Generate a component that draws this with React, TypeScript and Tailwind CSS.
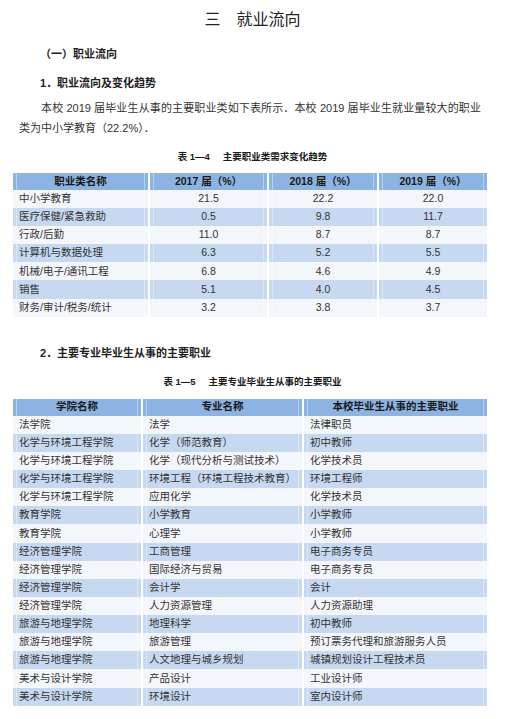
import React from "react";

const trend = [
  ["中小学教育", "21.5", "22.2", "22.0"],
  ["医疗保健/紧急救助", "0.5", "9.8", "11.7"],
  ["行政/后勤", "11.0", "8.7", "8.7"],
  ["计算机与数据处理", "6.3", "5.2", "5.5"],
  ["机械/电子/通讯工程", "6.8", "4.6", "4.9"],
  ["销售", "5.1", "4.0", "4.5"],
  ["财务/审计/税务/统计", "3.2", "3.8", "3.7"],
];

const majors = [
  ["法学院", "法学", "法律职员"],
  ["化学与环境工程学院", "化学（师范教育）", "初中教师"],
  ["化学与环境工程学院", "化学（现代分析与测试技术）", "化学技术员"],
  ["化学与环境工程学院", "环境工程（环境工程技术教育）", "环境工程师"],
  ["化学与环境工程学院", "应用化学", "化学技术员"],
  ["教育学院", "小学教育", "小学教师"],
  ["教育学院", "心理学", "小学教师"],
  ["经济管理学院", "工商管理", "电子商务专员"],
  ["经济管理学院", "国际经济与贸易", "电子商务专员"],
  ["经济管理学院", "会计学", "会计"],
  ["经济管理学院", "人力资源管理", "人力资源助理"],
  ["旅游与地理学院", "地理科学", "初中教师"],
  ["旅游与地理学院", "旅游管理", "预订票务代理和旅游服务人员"],
  ["旅游与地理学院", "人文地理与城乡规划", "城镇规划设计工程技术员"],
  ["美术与设计学院", "产品设计", "工业设计师"],
  ["美术与设计学院", "环境设计", "室内设计师"],
];

const rowBg = (i: number) => (i % 2 === 0 ? "bg-[#f3f6fb]" : "bg-[#c6d9f1]");

// one table cell: bg from the row, faint inner rule 3px inside each side
const Cell = ({
  children,
  bg,
  center,
  bold,
}: {
  children: React.ReactNode;
  bg: string;
  center?: boolean;
  bold?: boolean;
}) => (
  <div className={`${bg} px-[3px] h-full`}>
    <div
      className={`h-full flex items-center border-x border-white/40 ${
        center ? "justify-center" : "pl-[2px]"
      } ${bold ? "font-bold text-[#1a1a1a]" : "text-[#333]"}`}
    >
      {children}
    </div>
  </div>
);

const Caption = ({ no, title }: { no: string; title: string }) => (
  <div className="mt-[11px] flex justify-center text-[9.5px] leading-[16px] font-bold text-[#1a1a1a] whitespace-pre">
    <span>表 {no}</span>
    <span className="ml-[13px]">{title}</span>
  </div>
);

export default function App() {
  return (
    <div
      className="w-[505px] h-[719px] bg-white overflow-hidden pt-[10px]"
      style={{ fontFamily: '"Liberation Sans", "Noto Sans CJK SC", sans-serif' }}
    >
      <h1 className="text-center text-[16px] leading-[20px] text-[#222] whitespace-pre">
        三{"\u3000"}就业流向
      </h1>

      <h2 className="mt-[14px] pl-[40px] text-[11px] leading-[20px] font-bold text-[#222]">
        （一）职业流向
      </h2>
      <h3 className="mt-[9px] pl-[40px] text-[11px] leading-[20px] font-bold text-[#222]">
        1．职业流向及变化趋势
      </h3>
      <p className="mt-[5px] ml-[19px] mr-[24px] text-[11px] leading-[20px] text-[#333] indent-[22px] text-justify">
        本校 2019 届毕业生从事的主要职业类如下表所示．本校 2019 届毕业生就业量较大的职业类为中小学教育（22.2%）．
      </p>

      <Caption no="1—4" title="主要职业类需求变化趋势" />

      <div className="mt-[8px] mx-[13px] grid grid-cols-[135px_117px_108px_108px] gap-x-[2px] text-[10.5px] bg-white">
        {["职业类名称", "2017 届（%）", "2018 届（%）", "2019 届（%）"].map((h) => (
          <div key={h} className="h-[17px]">
            <Cell bg="bg-[#8db3e2]" center bold>
              {h}
            </Cell>
          </div>
        ))}
        {trend.map((r, i) =>
          r.map((c, j) => (
            <div key={`${i}-${j}`} className="h-[18.1px]">
              <Cell bg={rowBg(i)} center={j > 0}>
                {c}
              </Cell>
            </div>
          ))
        )}
      </div>

      <h3 className="mt-[26px] pl-[40px] text-[11px] leading-[20px] font-bold text-[#222]">
        2．主要专业毕业生从事的主要职业
      </h3>

      <Caption no="1—5" title="主要专业毕业生从事的主要职业" />

      <div className="mt-[9px] mx-[13px] grid grid-cols-[128px_159px_183px] gap-x-[2px] text-[10.5px] bg-white">
        {["学院名称", "专业名称", "本校毕业生从事的主要职业"].map((h) => (
          <div key={h} className="h-[17px]">
            <Cell bg="bg-[#8db3e2]" center bold>
              {h}
            </Cell>
          </div>
        ))}
        {majors.map((r, i) =>
          r.map((c, j) => (
            <div key={`${i}-${j}`} className="h-[18.125px]">
              <Cell bg={rowBg(i)}>{c}</Cell>
            </div>
          ))
        )}
      </div>
    </div>
  );
}
